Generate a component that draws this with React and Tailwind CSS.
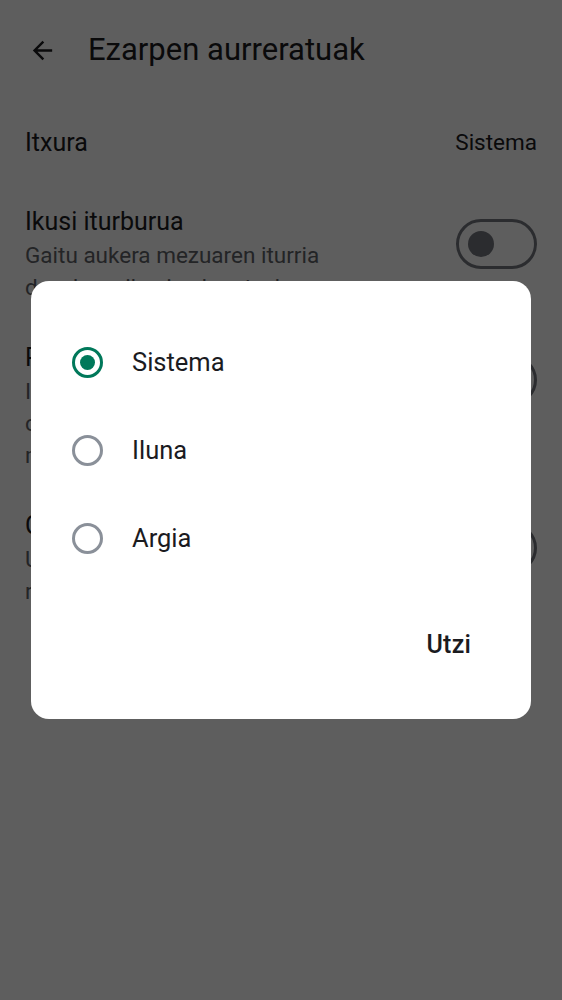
import { useState } from "react";

const font = { fontFamily: "Roboto, 'Noto Sans', sans-serif" };

function Toggle() {
	return (
		<div className="w-[81px] h-[50px] mt-[14px] rounded-full border-[3px] border-[#74777f] flex items-center px-[9px] shrink-0">
			<div className="w-[26px] h-[26px] rounded-full bg-[#74777f]" />
		</div>
	);
}

function SwitchRow({ title, lines }) {
	return (
		<div className="flex items-start justify-between px-[25px]">
			<div className="w-[330px]">
				<div className="text-[25px] leading-[34px] text-[#1b1b1f]">{title}</div>
				{lines.map((l) => (
					<div key={l} className="text-[22.5px] leading-[32px] text-[#5f6368] whitespace-nowrap">{l}</div>
				))}
			</div>
			<Toggle />
		</div>
	);
}

function Radio({ checked }) {
	return checked ? (
		<div className="w-[31px] h-[31px] rounded-full border-[3px] border-[#00785a] flex items-center justify-center">
			<div className="w-[15px] h-[15px] rounded-full bg-[#00785a]" />
		</div>
	) : (
		<div className="w-[31px] h-[31px] rounded-full border-[3px] border-[#8a9099]" />
	);
}

export default function App() {
	const [value, setValue] = useState("Sistema");
	return (
		<div className="relative w-[562px] h-[1000px] bg-white overflow-hidden" style={font}>
			<header className="flex items-center h-[100px] pl-[28px]">
				<svg width="29" height="29" viewBox="0 0 24 24" className="text-[#1b1b1f]">
					<path d="M20 11H7.83l5.59-5.59L12 4l-8 8 8 8 1.41-1.41L7.83 13H20v-2z" fill="currentColor" />
				</svg>
				<h1 className="ml-[31px] text-[31px] text-[#1b1b1f]">Ezarpen aurreratuak</h1>
			</header>
			<div className="flex items-center justify-between px-[25px] h-[86px]">
				<span className="text-[25px] text-[#1b1b1f]">Itxura</span>
				<span className="text-[22.5px] text-[#1b1b1f]">Sistema</span>
			</div>
			<div className="flex flex-col gap-[38px] pt-[19px]">
				<SwitchRow title="Ikusi iturburua" lines={["Gaitu aukera mezuaren iturria", "dezakezu ikusi aukeratzeko"]} />
				<SwitchRow title="Pantaila-argazkiak" lines={["Ikusi pantaila-argazkiak", "caso batzuetan babesteko", "mezuak irakurtzean"]} />
				<SwitchRow title="Cache-a garbitu" lines={["Unean gordetako datuak", "ribuan ezabatu"]} />
			</div>

			<div className="absolute inset-0 bg-black/[0.63]" />

			<div className="absolute left-[31px] top-[281px] w-[500px] h-[438px] bg-white rounded-[18px] flex flex-col">
				<div className="flex flex-col pt-[37px]">
					{["Sistema", "Iluna", "Argia"].map((o) => (
						<button
							key={o}
							onClick={() => setValue(o)}
							className="flex items-center h-[88px] pl-[41px] text-left"
						>
							<Radio checked={value === o} />
							<span className="ml-[29px] text-[25.5px] text-[#1b1b1f]">{o}</span>
						</button>
					))}
				</div>
				<div className="flex justify-end mt-[44px] pr-[60px]">
					<button className="text-[25px] font-medium text-[#1b1b1f] tracking-[0.2px]">Utzi</button>
				</div>
			</div>
		</div>
	);
}
